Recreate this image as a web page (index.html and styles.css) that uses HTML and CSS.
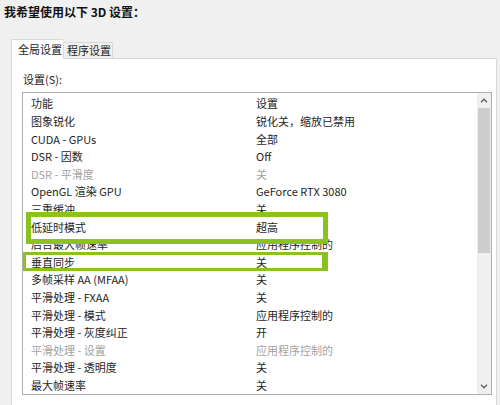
FILE: index.html
```html
<!DOCTYPE html>
<html>
<head>
  <meta charset="utf-8" />
  <title>3D 设置</title>
  <link rel="stylesheet" href="styles.css">
</head>
<body>
  <div class="title">我希望使用以下 3D 设置：</div>

  <div class="tabs">
    <div class="tab active">全局设置</div>
    <div class="tab">程序设置</div>
  </div>

  <div class="panel">
    <div class="label">设置(S):</div>

    <div class="listbox">
      <div class="rows">
        <div class="row head"><span>功能</span><span>设置</span></div>
        <div class="row"><span>图象锐化</span><span>锐化关，缩放已禁用</span></div>
        <div class="row"><span>CUDA - GPUs</span><span>全部</span></div>
        <div class="row"><span>DSR - 因数</span><span>Off</span></div>
        <div class="row muted"><span>DSR - 平滑度</span><span>关</span></div>
        <div class="row"><span>OpenGL 渲染 GPU</span><span>GeForce RTX 3080</span></div>
        <div class="row"><span>三重缓冲</span><span>关</span></div>
        <div class="row"><span>低延时模式</span><span>超高</span></div>
        <div class="row"><span>后台最大帧速率</span><span>应用程序控制的</span></div>
        <div class="row"><span>垂直同步</span><span>关</span></div>
        <div class="row"><span>多帧采样 AA (MFAA)</span><span>关</span></div>
        <div class="row"><span>平滑处理 - FXAA</span><span>关</span></div>
        <div class="row"><span>平滑处理 - 模式</span><span>应用程序控制的</span></div>
        <div class="row"><span>平滑处理 - 灰度纠正</span><span>开</span></div>
        <div class="row muted"><span>平滑处理 - 设置</span><span>应用程序控制的</span></div>
        <div class="row"><span>平滑处理 - 透明度</span><span>关</span></div>
        <div class="row"><span>最大帧速率</span><span>关</span></div>
      </div>

      <div class="scrollbar">
        <div class="arrow">
          <svg width="8" height="5" viewBox="0 0 8 5"><path d="M1 4.2 L4 1.2 L7 4.2" fill="none" stroke="#606060" stroke-width="1.4"/></svg>
        </div>
        <div class="thumb"></div>
        <div class="track"></div>
        <div class="arrow">
          <svg width="8" height="5" viewBox="0 0 8 5"><path d="M1 0.8 L4 3.8 L7 0.8" fill="none" stroke="#606060" stroke-width="1.4"/></svg>
        </div>
      </div>

      <!-- highlight marks drawn over the list -->
      <div class="mark mark-latency"></div>
      <div class="mark mark-vsync"></div>
    </div>
  </div>
</body>
</html>
```

FILE: styles.css
```css
* {
  margin: 0;
  padding: 0;
  box-sizing: border-box;
}

body {
  background-color: #f0f0f0;
  font-family: "Noto Sans CJK SC", "Liberation Sans", sans-serif;
  font-size: 11px;
  color: #1e1e1e;
}

.title {
  height: 24px;
  line-height: 24px;
  padding-left: 4px;
  font-size: 12px;
  font-weight: bold;
  color: #111;
}

.tabs {
  display: flex;
  align-items: flex-end;
  margin-top: 15px;
  margin-left: 11px;
  height: 19px;
}

.tab {
  height: 16px;
  line-height: 15px;
  padding: 0 1px 0 3px;
  border: 1px solid #d9d9d9;
  border-bottom: none;
  background-color: #f0f0f0;
  white-space: nowrap;
}

.tab.active {
  position: relative;
  height: 20px;
  line-height: 18px;
  padding: 0 1px 0 6px;
  margin-bottom: -1px;
  background-color: #fff;
  border-right: none;
  z-index: 1;
}

.panel {
  margin-left: 11px;
  width: 486px;
  height: 360px;
  background-color: #fff;
  border: 1px solid #d9d9d9;
  padding: 12px 0 0 10px;
}

.label {
  height: 16px;
  line-height: 16px;
  padding-left: 1px;
  margin-bottom: 5px;
}

.listbox {
  position: relative;
  display: flex;
  width: 470px;
  height: 303px;
  border: 1px solid #adadad;
  background-color: #fff;
}

.rows {
  flex: 1;
}

.row {
  display: grid;
  grid-template-columns: 233px 1fr;
  height: 17.6px;
  line-height: 17.6px;
  white-space: nowrap;
}

.row span:first-child {
  padding-left: 8px;
}

.row.head {
  height: 20px;
  line-height: 20px;
}

.row.muted {
  color: #a2a2a2;
}

.scrollbar {
  width: 14px;
  display: flex;
  flex-direction: column;
  background-color: #f0f0f0;
}

.arrow {
  height: 15px;
  display: flex;
  align-items: center;
  justify-content: center;
}

.thumb {
  height: 145px;
  margin: 0 1px;
  background-color: #cdcdcd;
}

.track {
  flex: 1;
}

.mark {
  position: absolute;
  border-color: #8cc21e;
  border-style: solid;
}

.mark-latency {
  left: 3px;
  top: 119px;
  width: 302px;
  height: 32px;
  border-width: 5px;
}

.mark-vsync {
  left: 0;
  top: 159px;
  width: 305px;
  height: 19px;
  border-width: 3px 6px 3px 3px;
}
```
